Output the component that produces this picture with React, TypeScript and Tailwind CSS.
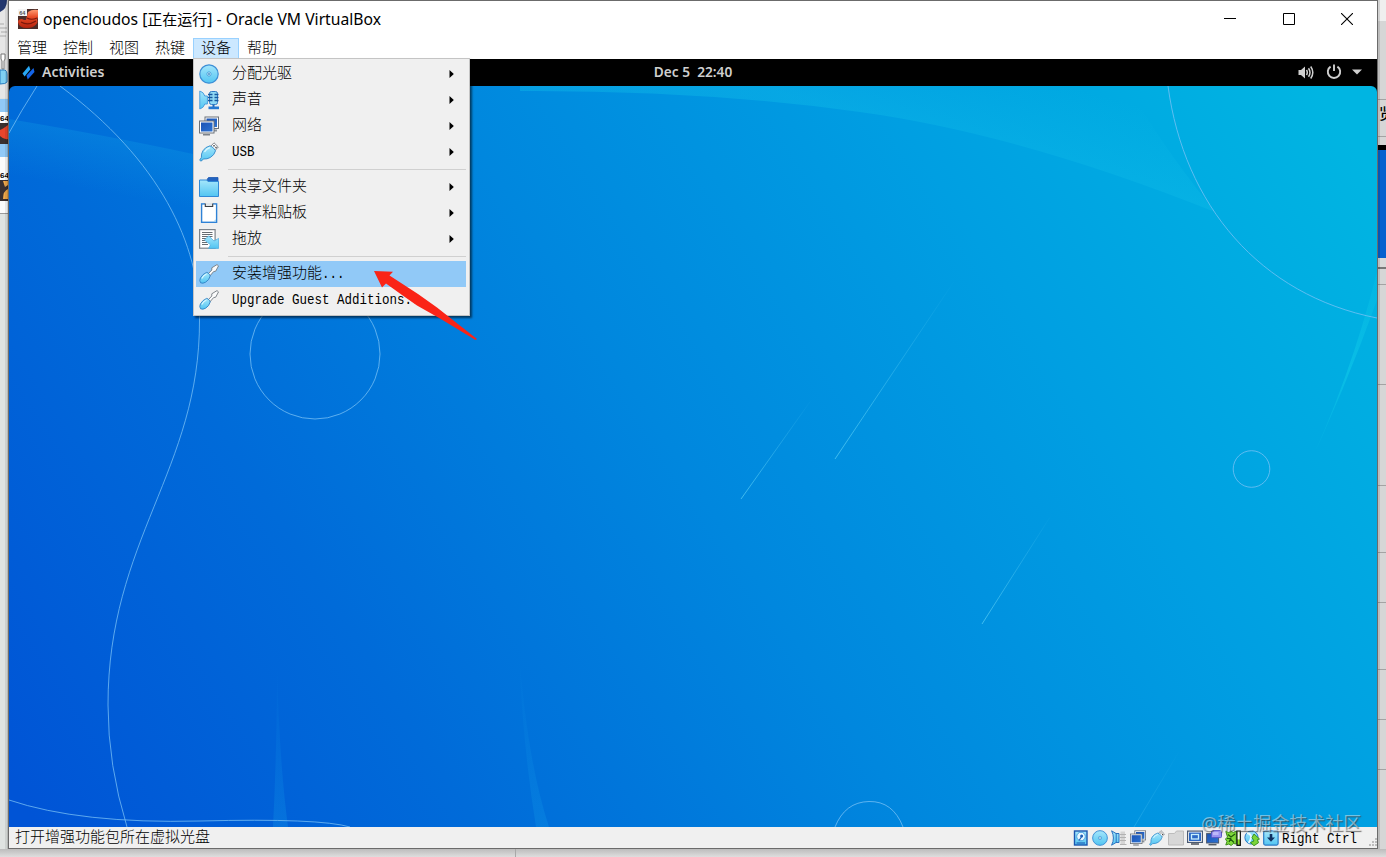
import { ReactNode } from "react";

const cjkMono = "font-['Liberation_Mono','Noto_Sans_CJK_SC',monospace]";
const uiFont = "font-['Noto_Sans','Noto_Sans_CJK_SC',sans-serif]";

type MenuEntry = {
  label: string;
  icon: ReactNode;
  submenu?: boolean;
  active?: boolean;
};

/* ---------- shared gradients ---------- */

function Defs() {
  return (
    <svg width="0" height="0" className="absolute">
      <defs>
        <linearGradient id="sky" x1="0" y1="0" x2="0" y2="1">
          <stop offset="0" stopColor="#a5e6fb" />
          <stop offset="1" stopColor="#52c5f2" />
        </linearGradient>
        <linearGradient id="navy" x1="0" y1="0" x2="1" y2="1">
          <stop offset="0" stopColor="#1c53b4" />
          <stop offset="1" stopColor="#2c72d2" />
        </linearGradient>
        <linearGradient id="hat" x1="0" y1="0" x2="0" y2="1">
          <stop offset="0" stopColor="#ff9a70" />
          <stop offset="0.4" stopColor="#e84a25" />
          <stop offset="1" stopColor="#b3220e" />
        </linearGradient>
      </defs>
    </svg>
  );
}

/* ---------- menu icons (20px) ---------- */

function DiscIcon({ size = 20 }: { size?: number }) {
  return (
    <svg width={size} height={size} viewBox="0 0 20 20">
      <circle cx="10" cy="10" r="9.2" fill="url(#sky)" stroke="#3d8fd6" strokeWidth="1.2" />
      <circle cx="10" cy="10" r="2.1" fill="#e8faff" stroke="#3f9bd8" strokeWidth="0.9" />
      <circle cx="10" cy="10" r="0.9" fill="#2f7fc4" />
    </svg>
  );
}

function AudioIcon() {
  return (
    <svg width="20" height="20" viewBox="0 0 20 20">
      <path d="M0.8 1q3.8 1 5 5h2.6v8H5.8q-1.2 4-5 5z" fill="url(#sky)" stroke="#4a9fdf" />
      <rect x="10.5" y="1.5" width="8" height="13" rx="2" fill="#8fd8f5" stroke="#2f7ac4" />
      <path d="M9 4.5h4.500M15.500 4.500h4M9 7.500h4.500M15.500 7.500h4M9 10.500h4.500M15.500 10.500h4" stroke="#16589f" strokeWidth="1.3" />
      <path d="M14.500 15v2" stroke="#1f67b8" strokeWidth="2" />
      <rect x="9.500" y="16.500" width="10.500" height="2.700" fill="#2478d2" />
    </svg>
  );
}

function NetworkIcon({ size = 20 }: { size?: number }) {
  return (
    <svg width={size} height={size} viewBox="0 0 20 20">
      <rect x="6" y="1" width="13.5" height="11.5" fill="#fff" stroke="#6a7078" />
      <rect x="7.500" y="2.500" width="10.500" height="8.500" fill="url(#navy)" />
      <path d="M14 13.500h4v2h-4z" fill="#8d949c" />
      <rect x="0.500" y="5" width="14.500" height="12" fill="#fff" stroke="#6a7078" />
      <rect x="2" y="6.500" width="11.500" height="9" fill="url(#navy)" />
      <path d="M4 18h7v1.500H4z" fill="#7c838b" />
    </svg>
  );
}

function UsbIcon({ size = 20 }: { size?: number }) {
  return (
    <svg width={size} height={size} viewBox="0 0 20 20">
      <path d="M11.500 4.500 15 0.800 19.300 5 15.800 8.700z" fill="#fff" stroke="#777d84" strokeWidth="0.9" />
      <path d="M14.300 3.800h1.400M16.300 5.500h1.400" stroke="#444" strokeWidth="1.4" />
      <path
        d="M11 3.800q3.500 1.200 5.500 5-1 4.200-5.200 6.700-3.300 1.800-6.600 1.500L1.800 19.200 0.700 18l1.700-2.600q-.4-3.400 1.500-6.600Q6.200 5 11 3.800z"
        fill="url(#sky)"
        stroke="#3187c8"
        strokeWidth="0.9"
      />
      <path d="M5.500 10q2-3.600 5.500-4.400" fill="none" stroke="#d9f7ff" strokeWidth="1.2" />
    </svg>
  );
}

function FolderIcon() {
  return (
    <svg width="20" height="20" viewBox="0 0 20 20">
      <path d="M8 5V2.500L9.500 0.500h9.500V5z" fill="#2263c0" stroke="#1c58b0" strokeWidth="0.8" />
      <path d="M0.500 3H7.500l1.500 1.500h10.500v15H0.500z" fill="url(#sky)" stroke="#3089d6" />
    </svg>
  );
}

function ClipboardIcon() {
  return (
    <svg width="20" height="20" viewBox="0 0 20 20">
      <rect x="2.600" y="0.900" width="15" height="18.400" fill="#fff" stroke="#2f82d6" strokeWidth="1.4" />
      <path d="M6 0h8v3.500H6z" fill="#dfe4e8" />
      <path d="M6.300 0.500v3h7.400v-3" fill="none" stroke="#3a3f45" strokeWidth="1.1" />
      <path d="M14.500 18.600l2.400-2.400v2.400z" fill="#9bd4f5" />
    </svg>
  );
}

function DragIcon() {
  return (
    <svg width="20" height="20" viewBox="0 0 20 20">
      <rect x="0.600" y="0.600" width="15.500" height="18.600" fill="#fff" stroke="#7d838a" strokeWidth="1.2" />
      <path d="M3 3.500h10.500M3 5.500h10.500M3 7.500h10.500M3 9.500h4M3 11.500h3M3 13.500h5M3 15.500h6" stroke="#555b62" strokeWidth="0.9" />
      <path d="M5.500 11 9.700 6.800l5.300 5.200 4.600-2.600v10H9.500l2-3.600z" fill="url(#sky)" stroke="#48a9e0" strokeWidth="0.7" />
    </svg>
  );
}

function ScrewdriverIcon() {
  return (
    <svg width="20" height="20" viewBox="0 0 20 20">
      <path
        d="M9 10 12.800 6V3.800L18 0.600l1.500 1.300-2.800 5.300-2.100.4L10.800 12z"
        fill="#fbfbfb"
        stroke="#737980"
        strokeWidth="0.9"
      />
      <path
        d="M7.600 8.400q1.600.2 2.200 1.400 1.200.6 1.400 2.200-1 4-4.600 6.200-2.800 1.700-5 .6-1.600-2.200-.2-4.800Q3.600 10 7.600 8.400z"
        fill="url(#sky)"
        stroke="#2f80c4"
        strokeWidth="0.9"
      />
      <path d="M2.800 14.600q1.500-3.200 4.600-4.600" fill="none" stroke="#d9f7ff" strokeWidth="1.2" />
    </svg>
  );
}

/* ---------- status bar icons (16px) ---------- */

function HardDiskIcon() {
  return (
    <svg width="16" height="16" viewBox="0 0 16 16">
      <rect x="1.500" y="1" width="12.500" height="14" fill="url(#sky)" stroke="#1a56b0" strokeWidth="1.4" />
      <circle cx="8" cy="6.500" r="4.300" fill="#e7f8ff" stroke="#4a9fe0" />
      <circle cx="8.600" cy="6" r="1.500" fill="#1f5fb8" />
      <path d="M8.500 7 6 10.500" stroke="#1f5fb8" strokeWidth="1.2" />
      <path d="M3.500 13h8.500" stroke="#1f5fb8" strokeWidth="1.2" />
    </svg>
  );
}

function SpeakerIcon() {
  return (
    <svg width="16" height="16" viewBox="0 0 16 16">
      <path d="M0.600 0.800 5 3.500h3v9H5l-4.400 2.700q1.800-3.600 1.800-7.200T0.600 0.800z" fill="url(#sky)" stroke="#2a72c0" />
      <path d="M5.200 3.500v9" stroke="#2a72c0" />
      <rect x="9.500" y="1.500" width="4.500" height="13" fill="#d4d4d4" />
      <path d="M9 4.500h6M9 7.500h6M9 10.500h6M9 14.500h6.500" stroke="#b2b2b2" />
    </svg>
  );
}

function GreyFolderIcon() {
  return (
    <svg width="16" height="16" viewBox="0 0 16 16">
      <path d="M0.500 3.500h6l2-2.500h7v14H0.500z" fill="#d7d7d7" stroke="#bcbcbc" />
    </svg>
  );
}

function DisplayIcon() {
  return (
    <svg width="16" height="16" viewBox="0 0 16 16">
      <rect x="0.600" y="1.100" width="14.800" height="11.300" fill="#fff" stroke="#4a5a72" strokeWidth="1.2" />
      <rect x="2" y="2.500" width="12" height="8.500" fill="#2c69c6" />
      <rect x="4.500" y="4.500" width="7" height="4.500" fill="#2c69c6" stroke="#c8f0fc" strokeWidth="1.3" />
      <path d="M4 14h8" stroke="#555b63" strokeWidth="1.6" />
    </svg>
  );
}

function RecordingIcon() {
  return (
    <svg width="16" height="16" viewBox="0 0 16 16">
      <rect x="0.600" y="3.600" width="12" height="9.400" fill="url(#navy)" stroke="#4e5a6c" />
      <path d="M2.500 14.700h8" stroke="#555b63" strokeWidth="1.4" />
      <rect x="5.500" y="0.600" width="10" height="7" rx="1" fill="#9a92f0" stroke="#5a56c8" />
      <rect x="7" y="2" width="5.500" height="3" fill="#bdb8fa" />
    </svg>
  );
}

function CpuIcon() {
  return (
    <svg width="16" height="16" viewBox="0 0 16 16">
      <path d="M0.800 1.500l3 1 2-1.500 2.500 1.500 3-1.500v13l-3-.5-2 2-2.500-1.500-3 1L2 11.500 0.500 9l2-2z" fill="#7fd93a" stroke="#3c8a1a" />
      <path d="M3 4.500l3 2.500 4-3M2 8.500h3l4 4M4 12l2-4" fill="none" stroke="#1e5c0c" strokeWidth="1.2" />
      <rect x="12" y="0.700" width="3.300" height="14.600" fill="#8fe02a" stroke="#111" strokeWidth="1.3" />
      <rect x="12.700" y="1.400" width="1.900" height="8" fill="#f4f4f4" />
    </svg>
  );
}

function MouseIcon() {
  return (
    <svg width="16" height="16" viewBox="0 0 16 16">
      <circle cx="7.500" cy="7.500" r="6.600" fill="url(#sky)" stroke="#2a78c8" />
      <path d="M3 3q4.500 1 4 4.500T4.500 13" fill="none" stroke="#e9faff" strokeWidth="1.8" />
      <path d="M8 7.500l2-3.500 5.500 5-2 .7 1 3-4.500 3-3.500-3.200 3.500-1.500z" fill="#7bd53a" stroke="#348a18" strokeWidth="0.9" />
    </svg>
  );
}

function HostKeyIcon() {
  return (
    <svg width="16" height="16" viewBox="0 0 16 16">
      <rect x="0.700" y="0.900" width="14.400" height="14.200" rx="1.500" fill="url(#sky)" stroke="#2b7bc6" strokeWidth="1.2" />
      <path d="M8 4v4" stroke="#0f3060" strokeWidth="2.600" />
      <path d="M4 7.500h8L8 11.800z" fill="#0f3060" />
    </svg>
  );
}

/* ---------- menu data ---------- */

const menuBar = ["管理", "控制", "视图", "热键", "设备", "帮助"];

const deviceMenu: MenuEntry[][] = [
  [
    { label: "分配光驱", icon: <DiscIcon />, submenu: true },
    { label: "声音", icon: <AudioIcon />, submenu: true },
    { label: "网络", icon: <NetworkIcon />, submenu: true },
    { label: "USB", icon: <UsbIcon />, submenu: true },
  ],
  [
    { label: "共享文件夹", icon: <FolderIcon />, submenu: true },
    { label: "共享粘贴板", icon: <ClipboardIcon />, submenu: true },
    { label: "拖放", icon: <DragIcon />, submenu: true },
  ],
  [
    { label: "安装增强功能...", icon: <ScrewdriverIcon />, active: true },
    { label: "Upgrade Guest Additions...", icon: <ScrewdriverIcon /> },
  ],
];

// latin glyphs take half the width of the 15px CJK ones, stretched a bit to the same height
function MenuText({ text }: { text: string }) {
  return (
    <>
      {text.split(/([\x20-\x7e]+)/).map((part, i) =>
        /^[\x20-\x7e]+$/.test(part) ? (
          <span key={i} className="inline-block align-middle text-[12.5px] leading-[18px] scale-y-[1.18]">
            {part}
          </span>
        ) : (
          <span key={i} className="font-light">{part}</span>
        )
      )}
    </>
  );
}

function DeviceMenu() {
  return (
    <div
      className={`absolute left-[193px] top-[58px] w-[277px] z-20 bg-[#f0f0f0] border border-[#c4c4c4] py-[2px] pl-[2px] pr-[3px] shadow-[2px_2px_2px_rgba(0,0,0,0.55)] ${cjkMono}`}
    >
      {deviceMenu.map((group, g) => (
        <div key={g}>
          {g > 0 && <div className="h-px mt-1 mb-[4px] ml-8 bg-[#d0d0d0]" />}
          {group.map((item) => (
            <div
              key={item.label}
              className={`h-[26px] flex items-center pl-[3px] pr-3 ${item.active ? "bg-[#91c9f7]" : ""}`}
            >
              <span className="w-[33px] shrink-0">{item.icon}</span>
              <span className="pt-[2px] text-[15px] leading-6 whitespace-pre text-black">
                <MenuText text={item.label} />
              </span>
              {item.submenu && (
                <svg width="5" height="8" viewBox="0 0 5 8" className="ml-auto mb-px">
                  <path d="M0.500 0v8L4.800 4z" fill="#000" />
                </svg>
              )}
            </div>
          ))}
        </div>
      ))}
    </div>
  );
}

/* ---------- window parts ---------- */

function TitleBar() {
  return (
    <div className="h-[37px] flex items-center pl-[9px] bg-white">
      <svg width="20" height="20" viewBox="0 0 20 20" className="mb-px">
        <rect width="20" height="20" fill="#4a2c28" />
        <path d="M0 13q0-3 4-3 2 1.500 4 .8L10 3q4-3 10-2v7q-1 2-1 3 1.500 2-1 4.500-3 3.500-9 3.500-8 0-9-6z" fill="url(#hat)" />
        <path d="M9 9q4 2.500 10 0M3 13q7 4 15-1" stroke="#7a170b" strokeWidth="1.200" fill="none" />
        <rect width="9" height="7" fill="#f4f4f4" />
        <text x="1.300" y="5.500" fontSize="5.500" fontWeight="700" fill="#555" fontFamily="Liberation Sans">64</text>
      </svg>
      <span className={`ml-[5px] mb-px text-[15.7px] leading-5 whitespace-pre text-black ${uiFont}`}>
        opencloudos [<span className="text-[15px]">正在运行</span>] - Oracle VM VirtualBox
      </span>
      <div className="ml-auto mr-[24px] flex items-center gap-[46.5px] mb-px">
        <svg width="12" height="12" viewBox="0 0 12 12">
          <path d="M0 5.500h12" stroke="#000" />
        </svg>
        <svg width="12" height="12" viewBox="0 0 12 12">
          <path d="M0.500 0.500h11v11H0.500z" fill="none" stroke="#000" />
        </svg>
        <svg width="12" height="12" viewBox="0 0 12 12">
          <path d="M0 0l12 12M12 0L0 12" stroke="#000" strokeWidth="1.100" />
        </svg>
      </div>
    </div>
  );
}

function MenuBar() {
  return (
    <div className={`h-[21px] flex bg-white ${cjkMono}`}>
      {menuBar.map((name) => (
        <button
          key={name}
          className={`w-[46px] h-[21px] pt-px text-[15px] font-light leading-[19px] text-center text-black border ${
            name === "设备" ? "bg-[#cce8ff] border-[#99d1ff]" : "border-transparent"
          }`}
        >
          {name}
        </button>
      ))}
    </div>
  );
}

function GuestTopBar() {
  return (
    <div className={`h-[27px] grid grid-cols-3 items-center bg-black text-[#cfcfcf] text-[14px] font-semibold ${uiFont}`}>
      <div className="flex items-center pl-[13px] gap-[7px]">
        <svg width="13" height="15" viewBox="0 0 13 15">
          <path d="M0.500 8.500 7 0.800 8.300 4.500 2.600 11.500z" fill="#29a8f5" />
          <path d="M4.500 10.500 11.500 3l1 4L5.700 14.500z" fill="#1464e8" />
        </svg>
        <span className="leading-5 mb-[2px]">Activities</span>
      </div>
      <div className="text-center leading-5 mb-[2px] text-[13.7px] whitespace-pre">Dec 5  22:40</div>
      <div className="flex items-center justify-end gap-3 pr-[15px] mb-px">
        <svg width="16" height="15" viewBox="0 0 16 15" fill="none" stroke="#cfcfcf">
          <path d="M0.500 5h2.500l4-3.500v12L3 10H0.500z" fill="#cfcfcf" stroke="none" />
          <path d="M8.500 5q1.600 2.500 0 5M10.500 3.300q3 4.200 0 8.400M12.700 1.500q4.200 6 0 12" strokeWidth="1.500" />
        </svg>
        <svg width="16" height="16" viewBox="0 0 16 16" fill="none" stroke="#cfcfcf" strokeWidth="1.900">
          <path d="M4.600 2.600a6.200 6.200 0 1 0 6.800 0M8 0.500v6.500" />
        </svg>
        <svg width="10" height="6" viewBox="0 0 10 6" className="-ml-0.5">
          <path d="M0 0.500h10L5 5.500z" fill="#cfcfcf" />
        </svg>
      </div>
    </div>
  );
}

function Wallpaper() {
  return (
    <svg width="1368" height="741" viewBox="9 86 1368 741" className="block rounded-t-[6px]">
      <defs>
        <linearGradient id="wall" gradientUnits="userSpaceOnUse" x1="60" y1="860" x2="1300" y2="60">
          <stop offset="0" stopColor="#0054d6" />
          <stop offset="0.25" stopColor="#006bd9" />
          <stop offset="0.5" stopColor="#0087de" />
          <stop offset="0.75" stopColor="#009fe2" />
          <stop offset="1" stopColor="#00b5e2" />
        </linearGradient>
        <linearGradient id="ridge" gradientUnits="userSpaceOnUse" x1="950" y1="50" x2="925" y2="135">
          <stop offset="0" stopColor="#10bce8" stopOpacity="0" />
          <stop offset="1" stopColor="#10bce8" stopOpacity="0.4" />
        </linearGradient>
        <linearGradient id="streak" x1="0" y1="1" x2="1" y2="0">
          <stop offset="0" stopColor="#5cd0f6" stopOpacity="0.7" />
          <stop offset="1" stopColor="#5cd0f6" stopOpacity="0" />
        </linearGradient>
        <linearGradient id="spike" x1="0" y1="0" x2="0" y2="1">
          <stop offset="0" stopColor="#1299e8" stopOpacity="0" />
          <stop offset="1" stopColor="#1299e8" stopOpacity="0.3" />
        </linearGradient>
        <linearGradient id="veil" gradientUnits="userSpaceOnUse" x1="100" y1="136" x2="90" y2="190">
          <stop offset="0" stopColor="#0d96e4" stopOpacity="0.35" />
          <stop offset="1" stopColor="#0d96e4" stopOpacity="0" />
        </linearGradient>
        <linearGradient id="beam" gradientUnits="userSpaceOnUse" x1="1377" y1="290" x2="1300" y2="490">
          <stop offset="0" stopColor="#12cdea" stopOpacity="0.2" />
          <stop offset="0.4" stopColor="#12cdea" stopOpacity="0.5" />
          <stop offset="1" stopColor="#12cdea" stopOpacity="0" />
        </linearGradient>
      </defs>
      <rect x="9" y="86" width="1368" height="741" fill="url(#wall)" />

      {/* soft folds */}
      <path d="M520 91Q700 90 860 112T1215 212Q1150 130 1130 86H520z" fill="url(#ridge)" />
      <path d="M9 119Q110 136 193 154V240H9z" fill="url(#veil)" />
      <path d="M1377 272Q1350 380 1302 480 1345 390 1377 300z" fill="url(#beam)" />
      <path d="M277 660Q279 760 288 827H273Q277 750 277 660z" fill="url(#spike)" />
      <path d="M519 650Q527 760 549 827H536Q522 740 519 650z" fill="url(#spike)" />

      {/* outlines */}
      <g fill="none" stroke="#7cc3f5" strokeOpacity="0.75">
        <path d="M37 86Q21 111 9 133" />
        <path d="M60 86C160 160 200 245 199.500 320C200 470 108 540 108 705Q108 765 127 827" />
        <path d="M9 800Q80 824 200 821T350 827" />
        <circle cx="315" cy="354" r="65" />
        <circle cx="1251.500" cy="469" r="18.300" />
        <path d="M1168 86C1184 205 1260 295 1377 318" />
        <path d="M835 827Q845 802 869 801.500T903 827" />
      </g>
      <g fill="none" stroke="url(#streak)">
        <path d="M741 499 812 399" />
        <path d="M835 459 955 280" />
        <path d="M982 624 1052 514" />
        <path d="M1134 827 1180 750" opacity="0.4" />
      </g>
    </svg>
  );
}

function StatusBar() {
  return (
    <div className={`h-[21px] flex items-center bg-[#f0f0f0] pl-[6px] text-black ${cjkMono}`}>
      <span className="pt-[2px] text-[15px] font-light leading-[19px] whitespace-pre">打开增强功能包所在虚拟光盘</span>
      <div className="ml-auto flex items-center gap-[3px]">
        <HardDiskIcon />
        <DiscIcon size={16} />
        <SpeakerIcon />
        <NetworkIcon size={16} />
        <UsbIcon size={16} />
        <GreyFolderIcon />
        <DisplayIcon />
        <RecordingIcon />
        <CpuIcon />
        <MouseIcon />
        <HostKeyIcon />
      </div>
      <span className="ml-[3px] mt-[2px] text-[12.5px] leading-[18px] scale-y-[1.18] whitespace-pre">Right Ctrl</span>
      <svg width="8" height="8" viewBox="0 0 8 8" className="ml-[12px] self-end mb-[2px]">
        <path d="M6 0h2v2H6zM3 3h2v2H3zM6 3h2v2H6zM0 6h2v2H0zM3 6h2v2H3zM6 6h2v2H6z" fill="#bdbdbd" />
      </svg>
    </div>
  );
}

/* ---------- windows showing behind ---------- */

function LeftEdge() {
  return (
    <svg width="8" height="849" viewBox="0 0 8 849" className="shrink-0 block">
      <rect width="8" height="849" fill="#dfe3e1" />
      <rect width="8" height="98" fill="#e6e6e6" />
      <path d="M0 0h7Q7 9 0 12z" fill="#22376e" />
      <path d="M0 24h4M0 28h7M1 32h6M0 36h6" stroke="#aaa" />
      <path d="M1 54h4v5l-1 2v8H2v-8l-1-2z" fill="#fff" stroke="#777" />
      <path d="M0 70h5q2 1 2 4v8q-1 2-7 2z" fill="#7fd0f3" stroke="#2b7fc0" />
      <rect y="99" width="8" height="58" fill="#91c9f7" />
      <rect y="112" width="8" height="11" fill="#fff" />
      <text x="0" y="121" fontSize="8" fontWeight="700" fontFamily="Liberation Sans">64</text>
      <rect y="123" width="8" height="21" fill="#3a3030" />
      <path d="M8 125Q3 129 0 130v6q4 4 8 3z" fill="#e8452c" />
      <rect y="157" width="8" height="56" fill="#fbfbfb" />
      <text x="0" y="178" fontSize="8" fontWeight="700" fontFamily="Liberation Sans">64</text>
      <rect y="180" width="8" height="21" fill="#3a3030" />
      <path d="M3 181h5v4l-3 2zM8 189q-5 2-5 10h5z" fill="#f0a94a" />
      <path d="M0 213.500h8" stroke="#9a9a9a" />
      <rect x="5" width="3" height="849" fill="#000" opacity="0.08" />
      <rect x="7" width="1" height="849" fill="#000" opacity="0.12" />
    </svg>
  );
}

const rightLines = [99, 136, 284, 384, 485, 552, 602, 669, 719, 769];

function RightEdge() {
  return (
    <svg width="8" height="849" viewBox="0 0 8 849" className="shrink-0 block">
      <rect width="8" height="849" fill="#d6d6d6" />
      <rect width="8" height="21" fill="#efefef" />
      {rightLines.map((y) => (
        <path key={y} d={`M0 ${y + 0.5}h8`} stroke="#a3a3a3" />
      ))}
      <text x="1" y="119" fontSize="15" fontWeight="500" fontFamily="Noto Sans CJK SC">览</text>
      <rect y="145" width="8" height="5" fill="#000" />
      <rect y="150" width="8" height="108" fill="#0561cf" />
      <rect y="258" width="8" height="9" fill="#d9d9d9" />
      <rect y="267" width="8" height="2" fill="#777" />
      <rect width="2" height="849" fill="#000" opacity="0.12" />
    </svg>
  );
}

export default function App() {
  return (
    <div className="relative w-[1386px] h-[857px] overflow-hidden bg-[#dcdcdc]">
      <Defs />
      <div className="flex h-[849px]">
        <LeftEdge />
        <div className="w-[1370px] h-[849px] flex flex-col border border-[#6b6b6b]">
          <TitleBar />
          <MenuBar />
          <GuestTopBar />
          <div className="bg-black h-[741px]">
            <Wallpaper />
          </div>
          <StatusBar />
        </div>
        <RightEdge />
      </div>
      <div className="h-2 flex bg-linear-to-b from-[#bcbcbc] to-[#dedede]">
        <div className="w-[516px] border-r border-[#a8a8a8]" />
      </div>

      <DeviceMenu />

      {/* pointer arrow */}
      <svg width="106" height="72" viewBox="372 269 106 72" className="absolute left-[372px] top-[269px] z-30">
        <path
          d="M374 271 393 271.800 389.500 275.500 418 294 437 307.500 477 339 475.500 340 440 318.500 417 305.500 402 295 386 283.500 382 287.500z"
          fill="#fa2417"
        />
      </svg>

      <div
        className={`absolute left-[1201px] top-[809px] text-[18px] leading-7 whitespace-nowrap text-white/45 [text-shadow:1px_1px_1px_rgba(60,60,60,0.7)] ${uiFont}`}
      >
        @稀土掘金技术社区
      </div>
    </div>
  );
}
